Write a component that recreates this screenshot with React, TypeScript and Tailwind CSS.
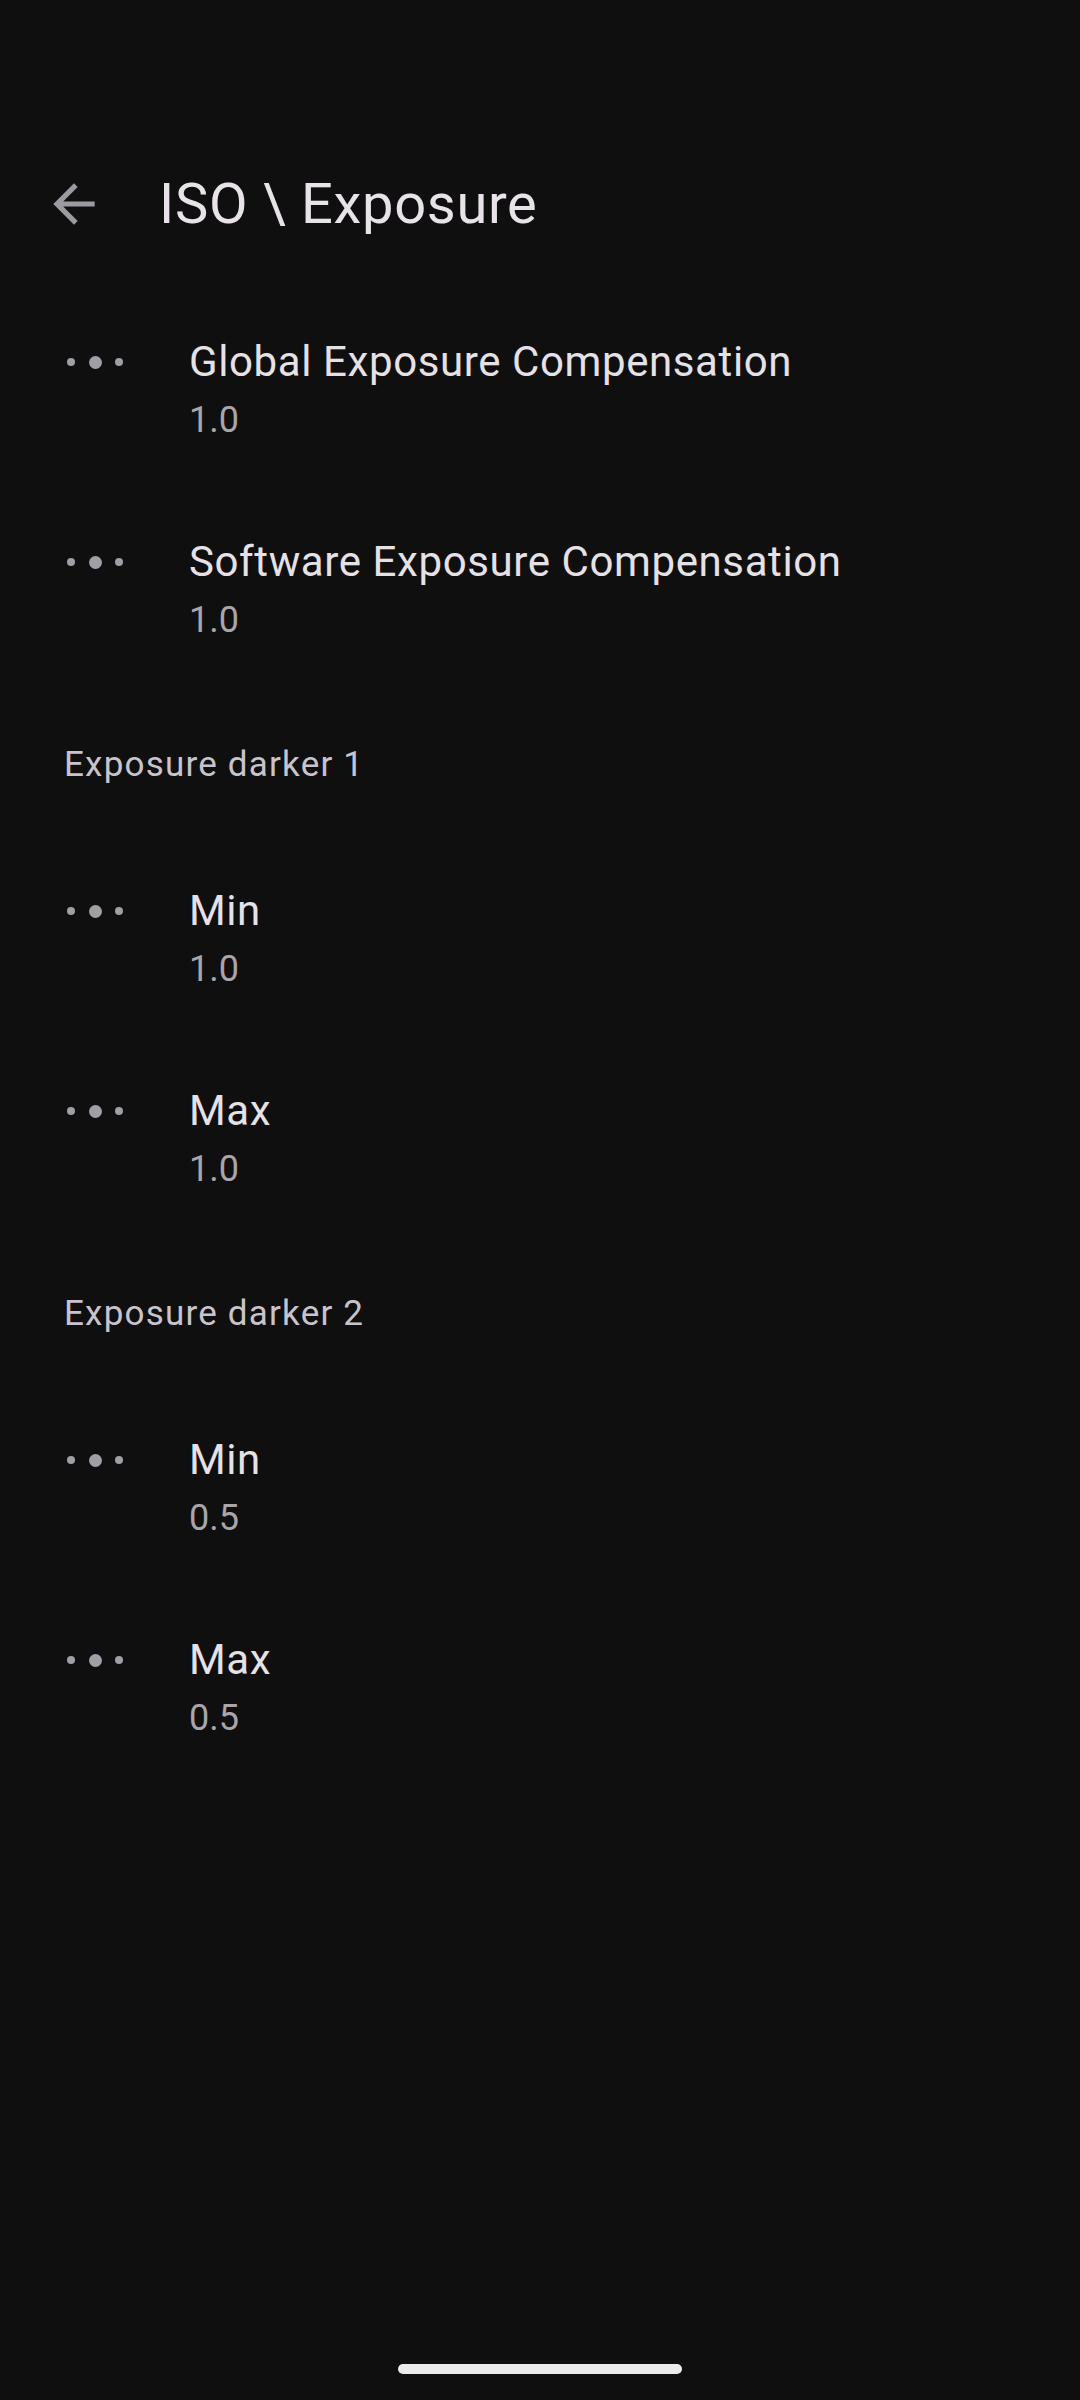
import React from "react";

type Item = { title: string; value: string };
type Section = { header?: string; items: Item[] };

const sections: Section[] = [
  {
    items: [
      { title: "Global Exposure Compensation", value: "1.0" },
      { title: "Software Exposure Compensation", value: "1.0" },
    ],
  },
  {
    header: "Exposure darker 1",
    items: [
      { title: "Min", value: "1.0" },
      { title: "Max", value: "1.0" },
    ],
  },
  {
    header: "Exposure darker 2",
    items: [
      { title: "Min", value: "0.5" },
      { title: "Max", value: "0.5" },
    ],
  },
];

function BackArrow() {
  return (
    <svg width="62" height="62" viewBox="0 -960 960 960" fill="#9d99a1" aria-hidden>
      <path d="M313-440l224 224-57 56-320-320 320-320 57 56-224 224h487v80H313Z" />
    </svg>
  );
}

function Dots() {
  return (
    <div className="flex items-center h-[50px]">
      <span className="block w-[8px] h-[8px] rounded-full bg-[#a29ea6]" />
      <span className="block w-[13px] h-[13px] rounded-full bg-[#a29ea6] ml-[14px]" />
      <span className="block w-[8px] h-[8px] rounded-full bg-[#a29ea6] ml-[13px]" />
    </div>
  );
}

function Row({ item }: { item: Item }) {
  return (
    <div className="h-[200px] flex items-start pl-[67px] pt-[47px]">
      <div className="w-[122px] shrink-0">
        <Dots />
      </div>
      <div className="flex flex-col">
        <div className="text-[42px] leading-[50px] tracking-[0.6px] text-[#e6e1e6]">{item.title}</div>
        <div className="text-[36px] leading-[48px] mt-[9px] text-[#a9a5aa]">{item.value}</div>
      </div>
    </div>
  );
}

export default function App() {
  return (
    <div
      className="w-[1080px] h-[2400px] bg-[#0f0f0f] flex flex-col"
      style={{ fontFamily: "Roboto, 'Noto Sans', sans-serif" }}
    >
      <div className="pt-[140px]">
        <div className="h-[128px] flex items-center">
          <div className="ml-[43px] w-[62px] h-[62px] flex items-center justify-center">
            <BackArrow />
          </div>
          <div className="ml-[54px] text-[56px] leading-[128px] tracking-[0.7px] text-[#e8e3e8]">
            ISO \ Exposure
          </div>
        </div>
      </div>

      <div className="mt-[22px] flex flex-col">
        {sections.map((s, i) => (
          <div key={i} className="flex flex-col">
            {s.header && (
              <div className="h-[149px] pt-[55px] pl-[64px]">
                <div className="text-[35px] leading-[40px] tracking-[1.2px] text-[#c9c3cb]">{s.header}</div>
              </div>
            )}
            {s.items.map((it, j) => (
              <Row key={j} item={it} />
            ))}
          </div>
        ))}
      </div>

      <div className="mt-auto mb-[26px] flex justify-center">
        <div className="w-[284px] h-[10px] rounded-full bg-[#ebebeb]" />
      </div>
    </div>
  );
}
